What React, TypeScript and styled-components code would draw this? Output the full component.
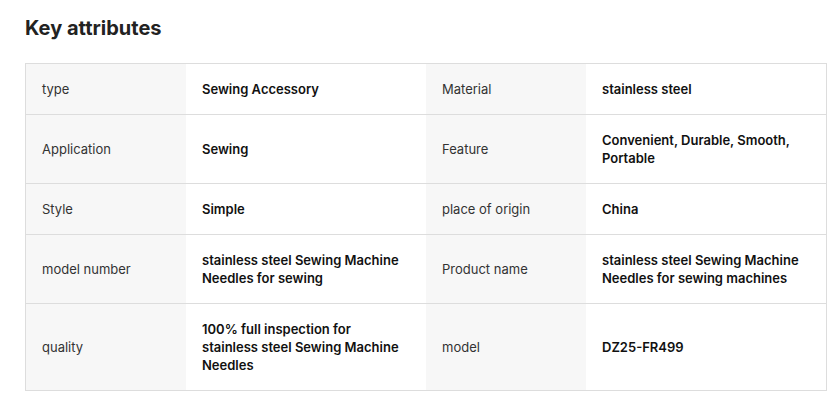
import styled, { createGlobalStyle } from 'styled-components';

const GlobalStyle = createGlobalStyle`
    body {
        margin: 0;
        background: #fff;
        font-family: Inter, "Noto Sans", Arial, sans-serif;
    }
`;

const Page = styled.div`
    padding: 14px 25px 0;
`;

const Title = styled.h2`
    margin: 0 0 21px;
    font-size: 20px;
    line-height: 28px;
    font-weight: 700;
    color: #222;
`;

const Table = styled.div`
    width: 800px;
    border: 1px solid #dddddd;
    border-bottom: none;
`;

const Row = styled.div`
    display: grid;
    grid-template-columns: 160px 240px 160px 240px;
    border-bottom: 1px solid #dddddd;
`;

const Cell = styled.div<{ $label?: boolean }>`
    display: flex;
    align-items: center;
    padding: 16px;
    font-size: 13px;
    line-height: 18px;
    background: ${(p) => (p.$label ? '#f7f7f7' : '#fff')};
    color: ${(p) => (p.$label ? '#333' : '#111')};
    font-weight: ${(p) => (p.$label ? 400 : 600)};
`;

const rows: [string, string, string, string][] = [
    ['type', 'Sewing Accessory', 'Material', 'stainless steel'],
    ['Application', 'Sewing', 'Feature', 'Convenient, Durable, Smooth, Portable'],
    ['Style', 'Simple', 'place of origin', 'China'],
    [
        'model number',
        'stainless steel Sewing Machine Needles for sewing',
        'Product name',
        'stainless steel Sewing Machine Needles for sewing machines',
    ],
    ['quality', '100% full inspection for stainless steel Sewing Machine Needles', 'model', 'DZ25-FR499'],
];

function App() {
    return (
        <Page>
            <GlobalStyle />
            <Title>Key attributes</Title>
            <Table>
                {rows.map((r, i) => (
                    <Row key={i}>
                        <Cell $label>{r[0]}</Cell>
                        <Cell>{r[1]}</Cell>
                        <Cell $label>{r[2]}</Cell>
                        <Cell>{r[3]}</Cell>
                    </Row>
                ))}
            </Table>
        </Page>
    );
}

export default App;
